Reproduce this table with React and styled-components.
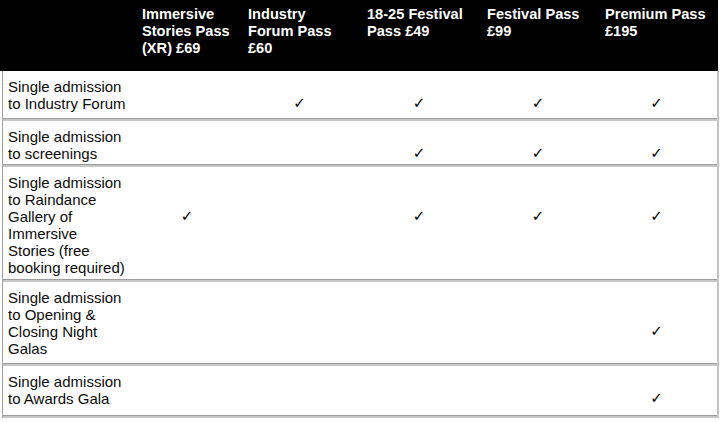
import React from "react";
import styled, { createGlobalStyle } from "styled-components";

const GlobalStyle = createGlobalStyle`
  html, body {
    margin: 0;
    padding: 0;
    background: #ffffff;
  }
  body {
    font-family: "Liberation Sans", Arial, Helvetica, sans-serif;
    color: #111111;
  }
`;

const COLS = "131px 106px 119px 120px 118px 119px";

const Table = styled.div`
  width: 718px;
`;

const HeaderRow = styled.div`
  display: grid;
  grid-template-columns: 134px 106px 119px 120px 118px 121px;
  height: 71px;
  background: #000000;
`;

const HeadCell = styled.div`
  padding: 6px 0 0 8px;
  color: #ffffff;
  font-weight: 700;
  font-size: 14.6px;
  line-height: 17px;
  white-space: nowrap;
`;

const Body = styled.div`
  margin-left: 2px;
  width: 714px;
  border-left: 1px solid #a0a0a0;
  border-right: 2px solid #c4c4c4;
`;

const Row = styled.div`
  display: grid;
  grid-template-columns: ${COLS};
  height: ${p => p.$height}px;
  box-sizing: border-box;
  border-bottom: 2px solid #c6c6c6;
  box-shadow: inset 0 -1px 0 #9c9c9c;
`;

const Label = styled.div`
  padding: 7px 0 0 5px;
  font-size: 15px;
  line-height: 17px;
  white-space: nowrap;
  color: #0c0c0c;
`;

const CheckCell = styled.div`
  padding-top: ${p => 7 + (p.$line - 1) * 17}px;
  text-align: center;
  font-family: "DejaVu Sans", sans-serif;
  font-size: 15px;
  line-height: 17px;
  color: #000000;
`;

const passes = [
  ["Immersive", "Stories Pass", "(XR) £69"],
  ["Industry", "Forum Pass", "£60"],
  ["18-25 Festival", "Pass £49"],
  ["Festival Pass", "£99"],
  ["Premium Pass", "£195"]
];

const rows = [
  {
    label: ["Single admission", "to Industry Forum"],
    height: 50,
    line: 2,
    checks: [false, true, true, true, true]
  },
  {
    label: ["Single admission", "to screenings"],
    height: 46,
    line: 2,
    checks: [false, false, true, true, true]
  },
  {
    label: [
      "Single admission",
      "to Raindance",
      "Gallery of",
      "Immersive",
      "Stories (free",
      "booking required)"
    ],
    height: 115,
    line: 3,
    checks: [true, false, true, true, true]
  },
  {
    label: ["Single admission", "to Opening &", "Closing Night", "Galas"],
    height: 84,
    line: 3,
    checks: [false, false, false, false, true]
  },
  {
    label: ["Single admission", "to Awards Gala"],
    height: 52,
    line: 2,
    checks: [false, false, false, false, true]
  }
];

const Lines = ({ lines }) =>
  lines.map((l, i) => (
    <React.Fragment key={i}>
      {i > 0 && <br />}
      {l}
    </React.Fragment>
  ));

export default function App() {
  return (
    <>
      <GlobalStyle />
      <Table>
        <HeaderRow>
          <HeadCell />
          {passes.map((p, i) => (
            <HeadCell key={i}>
              <Lines lines={p} />
            </HeadCell>
          ))}
        </HeaderRow>
        <Body>
          {rows.map((r, i) => (
            <Row key={i} $height={r.height}>
              <Label>
                <Lines lines={r.label} />
              </Label>
              {r.checks.map((c, j) => (
                <CheckCell key={j} $line={r.line}>
                  {c ? "✓" : ""}
                </CheckCell>
              ))}
            </Row>
          ))}
        </Body>
      </Table>
    </>
  );
}
